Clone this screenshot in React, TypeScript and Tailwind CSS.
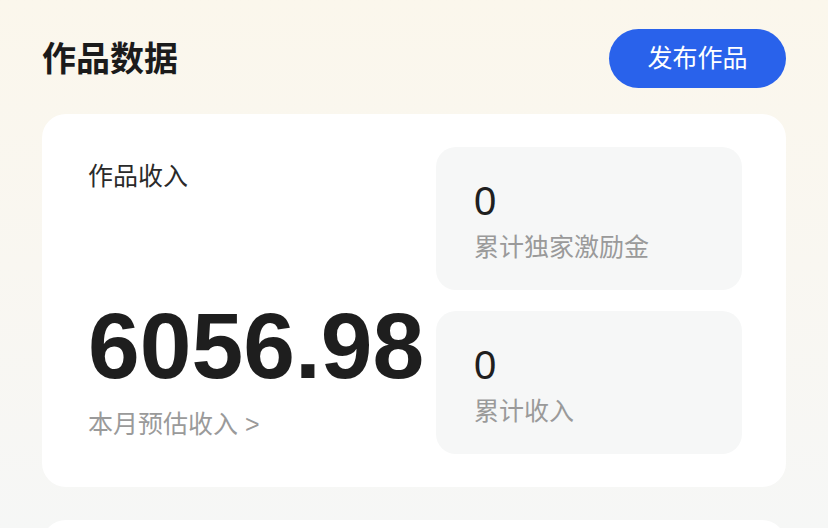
import React from 'react';

const font = { fontFamily: '"Liberation Sans", "Noto Sans CJK SC", sans-serif' };

interface StatProps {
  value: string;
  label: string;
}

const StatBox: React.FC<StatProps> = ({ value, label }) => (
  <div className="h-[143px] rounded-[20px] bg-[#f6f7f7] pl-[38px] pt-[30px]">
    <div className="text-[40px] leading-[48px] text-[#1f1f1f]">{value}</div>
    <div className="mt-[5px] text-[25px] leading-[34px] text-[#9a9a9a]">{label}</div>
  </div>
);

export default function App() {
  return (
    <div
      className="w-[828px] h-[528px] overflow-hidden bg-linear-to-b from-[#fbf7ec] via-[#f9f7f1] to-[#f6f7f6] px-[42px] pt-[29px]"
      style={font}
    >
      {/* Header */}
      <div className="flex items-center justify-between h-[59px]">
        <h1 className="text-[34px] font-bold text-[#1b1b1b] leading-none">作品数据</h1>
        <button className="h-[59px] w-[177px] rounded-full bg-[#2962eb] text-[25px] text-white">
          发布作品
        </button>
      </div>

      {/* Income card */}
      <div className="mt-[26px] h-[373px] rounded-[24px] bg-white flex pl-[46px] pr-[44px]">
        <div className="flex-1 flex flex-col justify-between pt-[45px] pb-[46px]">
          <div className="text-[25px] leading-[34px] text-[#2a2a2a]">作品收入</div>
          <div>
            <div className="text-[93px] leading-[92px] font-bold text-[#1e1e1e]">6056.98</div>
            <div className="mt-[15px] text-[25px] leading-[34px] text-[#9a9a9a]">本月预估收入 &gt;</div>
          </div>
        </div>
        <div className="w-[306px] flex flex-col gap-[21px] py-[33px]">
          <StatBox value="0" label="累计独家激励金" />
          <StatBox value="0" label="累计收入" />
        </div>
      </div>

      {/* Next card peeking */}
      <div className="mt-[33px] h-[40px] rounded-t-[24px] bg-white" />
    </div>
  );
}
